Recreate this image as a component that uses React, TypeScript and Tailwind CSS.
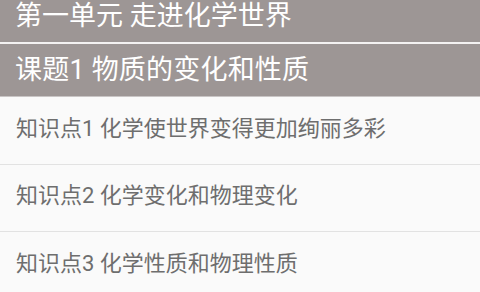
const sections = [
  "知识点1 化学使世界变得更加绚丽多彩",
  "知识点2 化学变化和物理变化",
  "知识点3 化学性质和物理性质",
];

export default function App() {
  return (
    <div
      className="w-[480px] h-[292px] overflow-hidden bg-[#fafafa]"
      style={{ fontFamily: "Roboto, 'Noto Sans CJK SC', sans-serif" }}
    >
      {/* unit header (scrolled partly off the top) */}
      <div className="h-[42px] bg-[#9d9695] flex items-center pl-[15px] pb-[10px]">
        <span className="text-[27px] leading-none text-white">第一单元 走进化学世界</span>
      </div>
      <div className="h-[2px] bg-[#f4f2f2]" />

      {/* lesson header */}
      <div className="h-[53px] bg-[#9d9695] flex items-center pl-[15px] border-b border-[#c9c5c5]">
        <span className="text-[27px] leading-none text-white tracking-[0.2px]">课题1 物质的变化和性质</span>
      </div>

      {/* knowledge points */}
      <div className="flex flex-col">
        {sections.map((title, i) => (
          <div
            key={title}
            className={`${i === 0 ? "h-[68px]" : "h-[67px]"} flex items-center pl-[16px] pb-[4px] ${i < sections.length - 1 ? "border-b border-[#e2e2e2]" : ""}`}
          >
            <span className="text-[22px] leading-none text-[#6e6e6e]">{title}</span>
          </div>
        ))}
      </div>
    </div>
  );
}
